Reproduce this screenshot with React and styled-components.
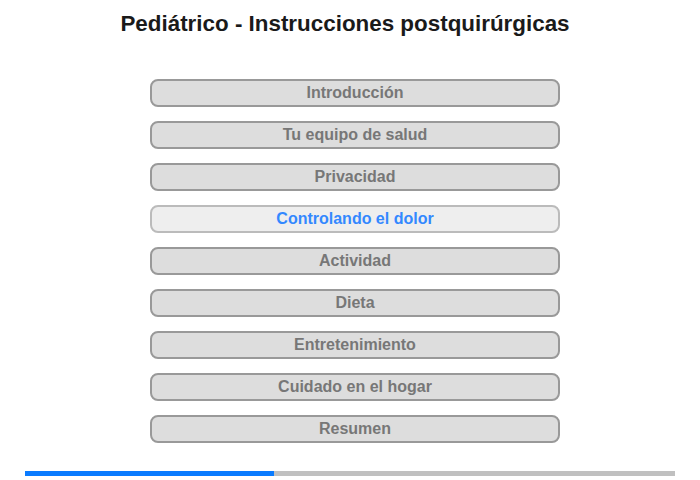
import styled, { createGlobalStyle } from "styled-components";

const sections = [
    "Introducción",
    "Tu equipo de salud",
    "Privacidad",
    "Controlando el dolor",
    "Actividad",
    "Dieta",
    "Entretenimiento",
    "Cuidado en el hogar",
    "Resumen",
];

const current = 3;
const progress = 38.3;

export default function App() {
    return (
        <>
            <GlobalStyle />
            <Page>
                <Title>Pediátrico - Instrucciones postquirúrgicas</Title>

                <Menu>
                    {sections.map((s, idx) => (
                        <MenuButton key={idx} $active={idx === current}>
                            {s}
                        </MenuButton>
                    ))}
                </Menu>

                <Progress>
                    <ProgressFill style={{ width: `${progress}%` }} />
                </Progress>
            </Page>
        </>
    );
}

//Styled Components
const GlobalStyle = createGlobalStyle`
    body {
        margin: 0;
        background: #ffffff;
        font-family: "Liberation Sans", Arial, sans-serif;
    }
`;
const Page = styled.div`
    width: 700px;
    height: 480px;
    display: flex;
    flex-direction: column;
    align-items: center;
    box-sizing: border-box;
    padding-top: 10px;
`;
const Title = styled.h1`
    margin: 0 10px 0 0;
    font-size: 22.4px;
    font-weight: bold;
    color: #1a1a1a;
    line-height: 28px;
`;
const Menu = styled.nav`
    display: flex;
    flex-direction: column;
    gap: 14px;
    margin: 41px 0 0 10px;
`;
const MenuButton = styled.div`
    width: 410px;
    height: 28px;
    box-sizing: border-box;
    display: flex;
    align-items: center;
    justify-content: center;
    border-radius: 8px;
    border: 2px solid ${(p) => (p.$active ? "#bbbbbb" : "#999999")};
    background-color: ${(p) => (p.$active ? "#eeeeee" : "#dddddd")};
    color: ${(p) => (p.$active ? "#3388ff" : "#777777")};
    font-size: 16px;
    font-weight: bold;
`;
const Progress = styled.div`
    margin-top: 28px;
    width: 650px;
    height: 5px;
    background-color: #c0c0c0;
`;
const ProgressFill = styled.div`
    height: 100%;
    background-color: #0a7bff;
`;
